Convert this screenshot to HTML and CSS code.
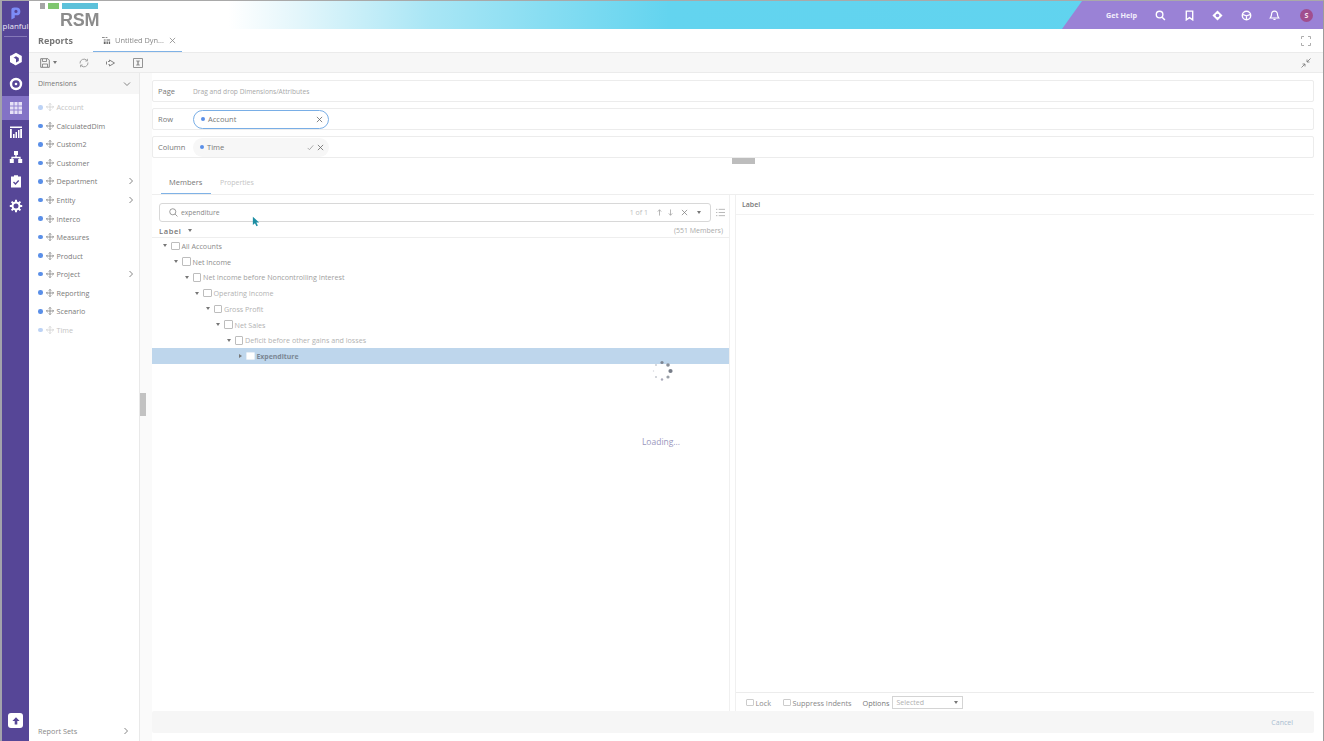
FILE: index.html
```html
<!DOCTYPE html>
<html lang="en">
<head>
<meta charset="utf-8">
<title>Reports</title>
<link rel="stylesheet" href="styles.css">
</head>
<body>
<div class="app">
  <nav class="rail">
    <div class="brand">
      <svg class="brand-mark" viewBox="0 0 12 14"><path d="M1.500 3C1.500 1.200 2.800.4 4.500.4H7a4.300 4.300 0 0 1 0 8.600H5.200v2.700L1.500 13.600z" fill="#7c8cf6"/><circle cx="6.500" cy="4.700" r="1.700" fill="#564697"/></svg>
      <span class="brand-name">planful</span>
    </div>
    <div class="rail-items">
      <a class="rail-item"><svg viewBox="0 0 14 14"><path d="M7 .8 12.800 4v6L7 13.200 1.200 10V4z" fill="#fff"/><path d="M7 4.300 9.800 6v3L7 10.600 4.200 9V6z" fill="#564697"/><path d="M1 3.500 7 7v6.500L1 10z" fill="#fff"/></svg></a>
      <a class="rail-item"><svg viewBox="0 0 14 14"><circle cx="7" cy="7" r="5" fill="none" stroke="#fff" stroke-width="2.400"/><circle cx="7" cy="7" r="1.300" fill="#fff"/></svg></a>
      <a class="rail-item active"><svg viewBox="0 0 14 14"><path d="M1 1h12v12H1z" fill="#e6e1f6"/><path d="M5 1v12M9 1v12M1 5h12M1 9h12" stroke="#9384d2" stroke-width="1"/></svg></a>
      <a class="rail-item"><svg viewBox="0 0 14 14"><path d="M1 1.500h12V3H1zM1 4h1.800v9H1zM11.200 4H13v9h-1.800zM4 9h1.600v4H4zM6.500 7H8v6H6.500zM9 5h1.500v8H9z" fill="#fff"/></svg></a>
      <a class="rail-item"><svg viewBox="0 0 14 14"><path d="M5 1h4v4H5zM.8 9h4v4h-4zM9.200 9h4v4h-4z" fill="#fff"/><path d="M7 5v2.500M3 9.500V7.500h8v2" fill="none" stroke="#fff" stroke-width="1.300"/></svg></a>
      <a class="rail-item"><svg viewBox="0 0 14 14"><path d="M2 2.500h3V1.200h4v1.300h3V13.500H2z" fill="#fff"/><path d="m4.500 8 2 2 3.200-3.500" fill="none" stroke="#564697" stroke-width="1.300"/></svg></a>
      <a class="rail-item"><svg viewBox="0 0 14 14"><circle cx="7" cy="7" r="3.500" fill="none" stroke="#fff" stroke-width="2"/><path d="M7 .8v3M7 10.200v3M.8 7h3M10.200 7h3M2.600 2.600l2.100 2.100M9.300 9.300l2.100 2.100M11.400 2.600 9.300 4.700M4.700 9.300l-2.100 2.100" stroke="#fff" stroke-width="2"/></svg></a>
    </div>
    <a class="rail-upload"><svg viewBox="0 0 10 10"><path d="M5 1.200 8.600 5H6.300v3.600H3.700V5H1.400z" fill="#564697"/></svg></a>
  </nav>

  <div class="main">
    <header class="topbar">
      <div class="logo">
        <div class="logo-bars"><i class="bar-grey"></i><i class="bar-green"></i><i class="bar-blue"></i></div>
        <div class="logo-text">RSM</div>
      </div>
      <div class="top-actions">
        <span class="help">Get Help</span>
        <svg class="top-icon" viewBox="0 0 12 12"><circle cx="5" cy="5" r="3.600" fill="none" stroke="#fff" stroke-width="1.500"/><path d="m7.800 7.800 3 3" stroke="#fff" stroke-width="1.600"/></svg>
        <svg class="top-icon" viewBox="0 0 12 12"><path d="M2.500 1.200h7v9.600L6 8.400l-3.500 2.400z" fill="none" stroke="#fff" stroke-width="1.500"/></svg>
        <svg class="top-icon" viewBox="0 0 12 12"><path d="M6 .5 11.500 6 6 11.500.5 6z" fill="#fff"/><circle cx="6" cy="6" r="2" fill="#9a82d6"/></svg>
        <svg class="top-icon" viewBox="0 0 12 12"><circle cx="6" cy="6" r="4.600" fill="none" stroke="#fff" stroke-width="1.500"/><path d="M1.500 4.800 6 6.300l4.500-1.500M6 6.300V10.500" stroke="#fff" stroke-width="1.300" fill="none"/></svg>
        <svg class="top-icon" viewBox="0 0 12 12"><path d="M6 1.200c-2.200 0-3.200 1.500-3.200 3.500 0 2-.8 3-1.500 4h9.400c-.7-1-1.500-2-1.500-4 0-2-1-3.500-3.200-3.500z" fill="none" stroke="#fff" stroke-width="1.300"/><path d="M4.800 10.300h2.400" stroke="#fff" stroke-width="1.200"/></svg>
        <span class="avatar">S</span>
      </div>
    </header>

    <div class="tabbar">
      <span class="section">Reports</span>
      <div class="doc-tab">
        <svg class="doc-icon" viewBox="0 0 10 10"><path d="M0 1h3v1H0zM4 1h2v1H4zM2 4h2v1H2zM5 4h4v1H5zM2 6h2v3H2zM5 6h1.500v3H5zM7.500 6H9v3H7.500z" fill="#666"/></svg>
        <span>Untitled Dyn...</span>
        <svg class="doc-close" viewBox="0 0 8 8"><path d="m1 1 6 6M7 1 1 7" stroke="#888" stroke-width=".9"/></svg>
      </div>
      <svg class="expand" viewBox="0 0 10 10"><path d="M.5 3V.5H3M7 .5h2.500V3M9.500 7v2.500H7M3 9.500H.5V7" fill="none" stroke="#999" stroke-width=".8"/></svg>
    </div>

    <div class="toolbar">
      <span class="tool tool-save">
        <svg viewBox="0 0 10 10"><path d="M.7.7h7.200l1.400 1.400v7.200H.7z" fill="none" stroke="#777" stroke-width=".9"/><path d="M2.500 1v2.500h4V1M2.500 9V6h5v3" fill="none" stroke="#777" stroke-width=".8"/></svg>
        <i class="caret"></i>
      </span>
      <span class="tool"><svg viewBox="0 0 10 10"><path d="M1 5.500A4 4 0 0 1 8 2.500M9 4.500A4 4 0 0 1 2 7.500" fill="none" stroke="#999" stroke-width=".9"/><path d="M8.500.8V3H6.300M1.500 9.200V7h2.200" fill="none" stroke="#999" stroke-width=".8"/></svg></span>
      <span class="tool"><svg viewBox="0 0 10 10"><path d="M3.500 3.500V2L8.500 5l-5 3V6.500h-1" fill="none" stroke="#777" stroke-width=".9"/><path d="M.5 3.500v3M2 3.500h1.500" stroke="#777" stroke-width=".9"/></svg></span>
      <span class="tool"><svg viewBox="0 0 10 10"><path d="M.5.500h9v9h-9z" fill="none" stroke="#888" stroke-width=".9"/><path d="M3 2.500h4L5.500 5 7 7.500H3L4.500 5z" fill="#999"/></svg></span>
      <svg class="collapse" viewBox="0 0 10 10"><path d="M9.500.5 6 4M6 1.500V4h2.500M.5 9.500 4 6M1.500 6H4v2.500" fill="none" stroke="#777" stroke-width=".8"/></svg>
    </div>

    <div class="workspace">
      <aside class="sidebar">
        <div class="side-head"><span>Dimensions</span><svg class="chev-down" viewBox="0 0 8 8"><path d="m1 2.500 3 3 3-3" fill="none" stroke="#777" stroke-width=".9"/></svg></div>
        <ul class="dim-list">
          <li class="dim off"><i class="dot"></i><svg class="move" viewBox="0 0 10 10"><use href="#mv"/></svg>Account</li>
          <li class="dim"><i class="dot"></i><svg class="move" viewBox="0 0 10 10"><use href="#mv"/></svg>CalculatedDim</li>
          <li class="dim"><i class="dot"></i><svg class="move" viewBox="0 0 10 10"><use href="#mv"/></svg>Custom2</li>
          <li class="dim"><i class="dot"></i><svg class="move" viewBox="0 0 10 10"><use href="#mv"/></svg>Customer</li>
          <li class="dim"><i class="dot"></i><svg class="move" viewBox="0 0 10 10"><use href="#mv"/></svg>Department<svg class="chev" viewBox="0 0 8 8"><use href="#cr"/></svg></li>
          <li class="dim"><i class="dot"></i><svg class="move" viewBox="0 0 10 10"><use href="#mv"/></svg>Entity<svg class="chev" viewBox="0 0 8 8"><use href="#cr"/></svg></li>
          <li class="dim"><i class="dot"></i><svg class="move" viewBox="0 0 10 10"><use href="#mv"/></svg>Interco</li>
          <li class="dim"><i class="dot"></i><svg class="move" viewBox="0 0 10 10"><use href="#mv"/></svg>Measures</li>
          <li class="dim"><i class="dot"></i><svg class="move" viewBox="0 0 10 10"><use href="#mv"/></svg>Product</li>
          <li class="dim"><i class="dot"></i><svg class="move" viewBox="0 0 10 10"><use href="#mv"/></svg>Project<svg class="chev" viewBox="0 0 8 8"><use href="#cr"/></svg></li>
          <li class="dim"><i class="dot"></i><svg class="move" viewBox="0 0 10 10"><use href="#mv"/></svg>Reporting</li>
          <li class="dim"><i class="dot"></i><svg class="move" viewBox="0 0 10 10"><use href="#mv"/></svg>Scenario</li>
          <li class="dim off"><i class="dot"></i><svg class="move" viewBox="0 0 10 10"><use href="#mv"/></svg>Time</li>
        </ul>
        <div class="side-foot"><span>Report Sets</span><svg class="chev" viewBox="0 0 8 8"><use href="#cr"/></svg></div>
      </aside>
      <div class="grip"><i></i></div>

      <section class="content">
        <div class="shelf"><span class="shelf-label">Page</span><span class="shelf-hint">Drag and drop Dimensions/Attributes</span></div>
        <div class="shelf"><span class="shelf-label">Row</span>
          <span class="pill selected"><i class="dot"></i><span class="pill-name">Account</span><svg class="x" viewBox="0 0 8 8"><path d="m1 1 6 6M7 1 1 7" stroke="#666" stroke-width=".9"/></svg></span>
        </div>
        <div class="shelf"><span class="shelf-label">Column</span>
          <span class="pill"><i class="dot"></i><span class="pill-name">Time</span><svg class="x" viewBox="0 0 8 8"><path d="m.8 4.500 2 2L7.200 1.500" fill="none" stroke="#999" stroke-width=".9"/></svg><svg class="x" viewBox="0 0 8 8"><path d="m1 1 6 6M7 1 1 7" stroke="#666" stroke-width=".9"/></svg></span>
        </div>
        <div class="divider"><i></i></div>

        <div class="tabs"><span class="tab current">Members</span><span class="tab">Properties</span></div>

        <div class="panes">
          <div class="pane-left">
            <div class="search-row">
              <div class="search">
                <svg class="s-icon" viewBox="0 0 10 10"><circle cx="4.200" cy="4.200" r="3.400" fill="none" stroke="#777" stroke-width=".8"/><path d="m6.800 6.800 2.600 2.600" stroke="#777" stroke-width=".8"/></svg>
                <span class="s-text">expenditure</span>
                <span class="s-count">1 of 1</span>
                <svg class="s-act" viewBox="0 0 8 8"><path d="M4 7.500V1M2 3l2-2.200L6 3" fill="none" stroke="#999" stroke-width=".8"/></svg>
                <svg class="s-act" viewBox="0 0 8 8"><path d="M4 .5V7M2 5l2 2.200L6 5" fill="none" stroke="#999" stroke-width=".8"/></svg>
                <svg class="s-act" viewBox="0 0 8 8"><path d="m1 1 6 6M7 1 1 7" stroke="#777" stroke-width=".8"/></svg>
                <i class="caret"></i>
              </div>
              <svg class="s-list" viewBox="0 0 10 10"><path d="M3 1.500h7M3 5h7M3 8.500h7M0 1.500h1.500M0 5h1.500M0 8.500h1.500" stroke="#aaa" stroke-width=".9"/></svg>
            </div>
            <div class="label-row"><span class="label-head">Label</span><i class="caret"></i><span class="count">(551 Members)</span></div>
            <div class="tree">
              <div class="node l0 t1"><i class="caret"></i><i class="box"></i>All Accounts</div>
              <div class="node l1 t1"><i class="caret"></i><i class="box"></i>Net Income</div>
              <div class="node l2 t2"><i class="caret"></i><i class="box"></i>Net Income before Noncontrolling Interest</div>
              <div class="node l3 t3"><i class="caret"></i><i class="box"></i>Operating Income</div>
              <div class="node l4 t3"><i class="caret"></i><i class="box"></i>Gross Profit</div>
              <div class="node l5 t3"><i class="caret"></i><i class="box"></i>Net Sales</div>
              <div class="node l6 t3"><i class="caret"></i><i class="box"></i>Deficit before other gains and losses</div>
              <div class="node l7 hit"><i class="caret side"></i><i class="box"></i>Expenditure</div>
            </div>
            <div class="loading">
              <svg class="spinner" viewBox="0 0 22 22"><circle cx="11" cy="2.500" r="1.600" fill="#7f8794"/><circle cx="17" cy="5" r="1.800" fill="#8a8f98"/><circle cx="19.500" cy="11" r="2.100" fill="#777d88"/><circle cx="17" cy="17" r="1.600" fill="#9aa0a8"/><circle cx="11" cy="19.500" r="1.200" fill="#aab"/><circle cx="5" cy="17" r="1" fill="#c4c8cf"/><circle cx="2.500" cy="11" r=".7" fill="#d6d8dd"/><circle cx="5" cy="5" r=".9" fill="#c4c8cf"/></svg>
              <span class="loading-text">Loading...</span>
            </div>
          </div>
          <div class="pane-right">
            <div class="right-head">Label</div>
            <div class="right-body"></div>
            <div class="options">
              <i class="box"></i><span class="opt">Lock</span>
              <i class="box gap"></i><span class="opt">Suppress Indents</span>
              <span class="opt opt-label">Options</span>
              <span class="select"><span>Selected</span><i class="caret"></i></span>
            </div>
          </div>
        </div>
        <div class="footer"><span class="cancel">Cancel</span></div>
      </section>
    </div>
  </div>
</div>

<svg class="cursor" viewBox="0 0 10 14"><path d="M1 1v10.500l2.600-2.400 2 4 1.800-.9-2-3.900H9z" fill="#1d8ea3"/></svg>

<svg class="defs" aria-hidden="true">
  <symbol id="mv" viewBox="0 0 10 10"><path d="M5 .5v9M.5 5h9M3.500 2 5 .5 6.500 2M3.500 8 5 9.500 6.500 8M2 3.500.5 5 2 6.500M8 3.500 9.500 5 8 6.500" fill="none" stroke="currentColor" stroke-width=".9"/></symbol>
  <symbol id="cr" viewBox="0 0 8 8"><path d="m2.500 1 3 3-3 3" fill="none" stroke="#777" stroke-width=".9"/></symbol>
</svg>
</body>
</html>
```
FILE: styles.css
```css
* { box-sizing: border-box; }
html, body { margin: 0; height: 100%; overflow: hidden; }
body {
  font-family: "Open Sans", "Liberation Sans", sans-serif;
  font-size: 7.500px;
  color: #777;
  background: #fff;
}
.app {
  display: flex;
  width: 1324px;
  height: 741px;
  border-top: 1px solid #a9a9a9;
  border-right: 1px solid #9c9c9c;
  filter: blur(.55px);
}
i { display: block; }
ul { list-style: none; margin: 0; padding: 0; }

/* rail */
.rail {
  width: 29px;
  flex: none;
  display: flex;
  flex-direction: column;
  background: #564697;
  border-left: 2px solid #a3a3ab;
  color: #fff;
}
.brand {
  height: 36px;
  margin: 0 2px;
  padding-top: 6px;
  border-bottom: 1px solid #8578b8;
  display: flex;
  flex-direction: column;
  align-items: center;
}
.brand-mark { width: 11px; height: 13px; }
.brand-name { font-size: 8px; line-height: 9px; margin-top: 1px; color: #e9e6f5; }
.rail-items { display: flex; flex-direction: column; padding-top: 10px; }
.rail-item {
  height: 24.400px;
  display: flex;
  align-items: center;
  justify-content: center;
}
.rail-item svg { width: 14px; height: 14px; }
.rail-item.active { background: #8373c6; }
.rail-upload {
  margin: auto 0 13px 6px;
  width: 15px;
  height: 15px;
  background: #fff;
  border-radius: 3px;
  display: flex;
  align-items: center;
  justify-content: center;
}
.rail-upload svg { width: 10px; height: 10px; }

/* main */
.main { flex: 1; min-width: 0; display: flex; flex-direction: column; }
.topbar {
  height: 28px;
  flex: none;
  display: flex;
  justify-content: space-between;
  background: linear-gradient(90deg, #fff 0, #fff 200px, #e3f6fb 270px, #a9e6f5 400px, #63d4ef 640px, #5fd3ef 100%);
}
.logo { padding: 2px 0 0 11px; }
.logo-bars { display: flex; gap: 3px; height: 6px; }
.logo-bars i { height: 6px; }
.bar-grey { width: 5px; background: #a5a5a5; }
.bar-green { width: 11px; background: #7fc66f; }
.bar-blue { width: 36px; background: #5cc1da; }
.logo-text {
  font-family: "Liberation Sans", sans-serif;
  font-weight: 700;
  font-size: 18px;
  line-height: 20px;
  margin: 1px 0 0 20px;
  color: #8c8c8c;
  letter-spacing: -.2px;
}
.top-actions {
  width: 261px;
  padding: 0 9px 0 44px;
  display: flex;
  align-items: center;
  background: #9a82d6;
  clip-path: polygon(20px 0, 100% 0, 100% 100%, 0 100%);
}
.help { font-weight: 700; font-size: 7.200px; color: #f3effc; width: 49px; flex: none; }
.top-icon { width: 11px; height: 11px; margin-right: 17.600px; flex: none; }
.avatar {
  width: 13px;
  height: 13px;
  margin-left: 2px;
  border-radius: 50%;
  background: #a14e8e;
  color: #f6e7f2;
  font-size: 7px;
  font-weight: 700;
  display: flex;
  align-items: center;
  justify-content: center;
}

/* tabs */
.tabbar {
  height: 24px;
  flex: none;
  display: flex;
  align-items: stretch;
  padding: 0 12px 0 9px;
  background: #fff;
  border-bottom: 1px solid #ebebeb;
}
.section { font-weight: 700; font-size: 9px; color: #777; line-height: 24px; width: 55px; }
.doc-tab {
  width: 89px;
  margin-right: auto;
  display: flex;
  align-items: center;
  gap: 4px;
  padding-left: 9px;
  border-bottom: 1px solid #7fb2e6;
  font-size: 7.400px;
  color: #888;
  white-space: nowrap;
}
.doc-icon { width: 9px; height: 9px; flex: none; }
.doc-close { width: 7px; height: 7px; flex: none; margin-left: 1px; }
.expand { width: 10px; height: 10px; align-self: center; }

.toolbar {
  height: 20px;
  flex: none;
  display: flex;
  align-items: center;
  padding: 0 12px 0 11px;
  background: #f7f7f7;
  border-bottom: 1px solid #ebebeb;
}
.tool { width: 27px; display: flex; align-items: center; }
.tool svg { width: 10px; height: 10px; }
.tool-save { width: 39px; gap: 3px; }
.caret {
  width: 0;
  height: 0;
  flex: none;
  border-left: 2.500px solid transparent;
  border-right: 2.500px solid transparent;
  border-top: 3px solid #777;
}
.collapse { width: 10px; height: 10px; margin-left: auto; }

/* workspace */
.workspace { flex: 1; min-height: 0; display: flex; }
.sidebar {
  width: 111px;
  flex: none;
  display: flex;
  flex-direction: column;
  background: #fff;
  border-right: 1px solid #e9e9e9;
}
.side-head {
  height: 21px;
  flex: none;
  display: flex;
  align-items: center;
  justify-content: space-between;
  padding: 0 8px 0 9px;
  background: #f6f6f6;
  font-size: 7px;
  color: #777;
}
.chev-down, .chev { width: 8px; height: 8px; }
.dim-list { padding-top: 4px; }
.dim {
  height: 18.560px;
  display: flex;
  align-items: center;
  padding: 0 4px 0 9px;
  font-size: 7.200px;
  color: #7a7a7a;
}
.dot { width: 4.500px; height: 4.500px; border-radius: 50%; background: #5a8fe8; flex: none; }
.move { width: 8px; height: 8px; margin: 0 3px; color: #777; flex: none; }
.dim .chev { margin-left: auto; }
.dim.off { color: #c4c4c4; }
.dim.off .dot { background: #bcd2f5; }
.dim.off .move { color: #ccc; }
.side-foot {
  margin-top: auto;
  height: 21px;
  flex: none;
  display: flex;
  align-items: center;
  justify-content: space-between;
  padding: 0 9px;
  font-size: 7.300px;
  color: #888;
}
.grip {
  width: 12px;
  flex: none;
  background: #fafafa;
  display: flex;
  align-items: center;
}
.grip i { width: 6px; height: 23px; background: #c2c2c2; margin-top: -5px; }

/* content */
.content {
  flex: 1;
  min-width: 0;
  display: flex;
  flex-direction: column;
  padding: 7px 9px 8px 0;
  background: #fff;
}
.shelf {
  height: 22px;
  flex: none;
  margin-bottom: 6px;
  display: flex;
  align-items: center;
  padding-left: 5px;
  border: 1px solid #ececec;
  border-radius: 2px;
}
.shelf-label { width: 35px; flex: none; color: #777; }
.shelf-hint { color: #a8a8a8; font-size: 6.650px; }
.pill {
  width: 136px;
  height: 19px;
  display: flex;
  align-items: center;
  padding: 0 5px 0 7px;
  background: #f7f7f7;
  border-radius: 10px;
  color: #777;
}
.pill.selected { background: #fff; border: 1px solid #79aee6; }
.pill-name { margin-left: 3px; margin-right: auto; }
.pill .dot { width: 4px; height: 4px; }
.x { width: 7px; height: 7px; margin-left: 3px; }
.divider { height: 3px; margin-top: -6px; display: flex; justify-content: center; }
.divider i { width: 23px; height: 6px; background: #bdbdbd; margin-left: 20px; }

.tabs { height: 34px; flex: none; display: flex; align-items: flex-end; padding-left: 9px; border-bottom: 1px solid #eee; }
.tab { padding: 0 9px 4px; height: 18px; line-height: 13px; font-size: 7px; color: #c4c4c4; }
.tab.current { color: #777; font-size: 7.500px; border-bottom: 1px solid #7fb2e6; width: 50px; padding-left: 8px; padding-right: 0; }

.panes { flex: 1; min-height: 0; display: flex; }
.pane-left {
  width: 578px;
  flex: none;
  position: relative;
  display: flex;
  flex-direction: column;
  border-right: 1px solid #f0f0f0;
}
.search-row { display: flex; align-items: center; padding: 8px 0 0 7px; }
.search {
  width: 552px;
  height: 19px;
  display: flex;
  align-items: center;
  padding: 0 9px;
  border: 1px solid #d8d8d8;
  border-radius: 3px;
  color: #888;
}
.s-icon { width: 9px; height: 9px; margin-right: 3px; }
.s-text { margin-right: auto; font-size: 6.800px; }
.s-count { color: #bdbdbd; font-size: 7px; margin-right: 3px; }
.s-act { width: 7px; height: 7px; margin-left: 4.500px; }
.s-act:nth-of-type(4) { margin-left: 7px; }
.search .caret { margin-left: 9px; }
.s-list { width: 9px; height: 9px; margin-left: 5px; }
.label-row {
  height: 14px;
  margin-top: 2px;
  display: flex;
  align-items: center;
  gap: 6px;
  padding: 0 6px 0 7px;
  border-bottom: 1px solid #eee;
}
.label-head { font-weight: 600; letter-spacing: .6px; color: #777; }
.count { margin-left: auto; color: #aaa; font-size: 7px; }
.node {
  height: 15.750px;
  display: flex;
  align-items: center;
  font-size: 7.150px;
}
.node .caret { margin-right: 4px; }
.box {
  width: 8.500px;
  height: 8.500px;
  flex: none;
  border: 1px solid #bdbdbd;
  border-radius: 1px;
  background: #fff;
}
.node .box { margin-right: 2px; }
.l0 { padding-left: 11px; }
.l1 { padding-left: 22px; }
.l2 { padding-left: 32.500px; }
.l3 { padding-left: 43px; }
.l4 { padding-left: 53.500px; }
.l5 { padding-left: 64px; }
.l6 { padding-left: 74.500px; }
.l7 { padding-left: 87px; }
.t1 { color: #8c8c8c; }
.t2 { color: #a0a0a0; }
.t3 { color: #b2b2b2; }
.hit { background: #bed6ec; color: #7b8794; font-weight: 700; font-size: 6.900px; }
.hit .box { border-color: #e6eef6; }
.node .caret.side {
  border-top: 2.500px solid transparent;
  border-bottom: 2.500px solid transparent;
  border-left: 3px solid #777;
  border-right: 0;
  margin-right: 4px;
}
.loading {
  position: absolute;
  left: 490px;
  top: 165px;
  width: 40px;
  display: flex;
  flex-direction: column;
  align-items: center;
}
.spinner { width: 22px; height: 22px; }
.loading-text { margin-top: 54px; margin-right: 2px; color: #9a97bd; font-size: 8.500px; }

.pane-right {
  flex: 1;
  min-width: 0;
  margin-left: 5px;
  display: flex;
  flex-direction: column;
  border-left: 1px solid #f0f0f0;
}
.right-head {
  height: 20px;
  flex: none;
  padding-left: 6px;
  line-height: 19px;
  font-weight: 600;
  font-size: 7px;
  color: #777;
  border-bottom: 1px solid #f2f2f2;
}
.right-body { flex: 1; }
.options {
  height: 19px;
  flex: none;
  display: flex;
  align-items: center;
  padding: 1px 0 0 10px;
  border-top: 1px solid #ececec;
  font-size: 7.300px;
  color: #888;
}
.options .box { width: 7.500px; height: 7.500px; border-color: #ccc; margin-right: 2px; }
.options .gap { margin-left: 12px; }
.opt-label { margin-left: 11px; color: #777; }
.select {
  width: 71px;
  height: 13px;
  margin-left: 3px;
  display: flex;
  align-items: center;
  justify-content: space-between;
  padding: 0 4px 0 3px;
  border: 1px solid #d4d4d4;
  font-size: 7px;
  color: #b0b0b0;
}
.footer {
  height: 22px;
  flex: none;
  display: flex;
  align-items: center;
  justify-content: flex-end;
  padding-right: 21px;
  background: #f6f6f6;
  border-radius: 2px;
}
.cancel { color: #a8bcd0; font-size: 7px; }

/* overlays */
.cursor { position: absolute; left: 252px; top: 216px; width: 8px; height: 11px; }
.defs { position: absolute; width: 0; height: 0; }
```
